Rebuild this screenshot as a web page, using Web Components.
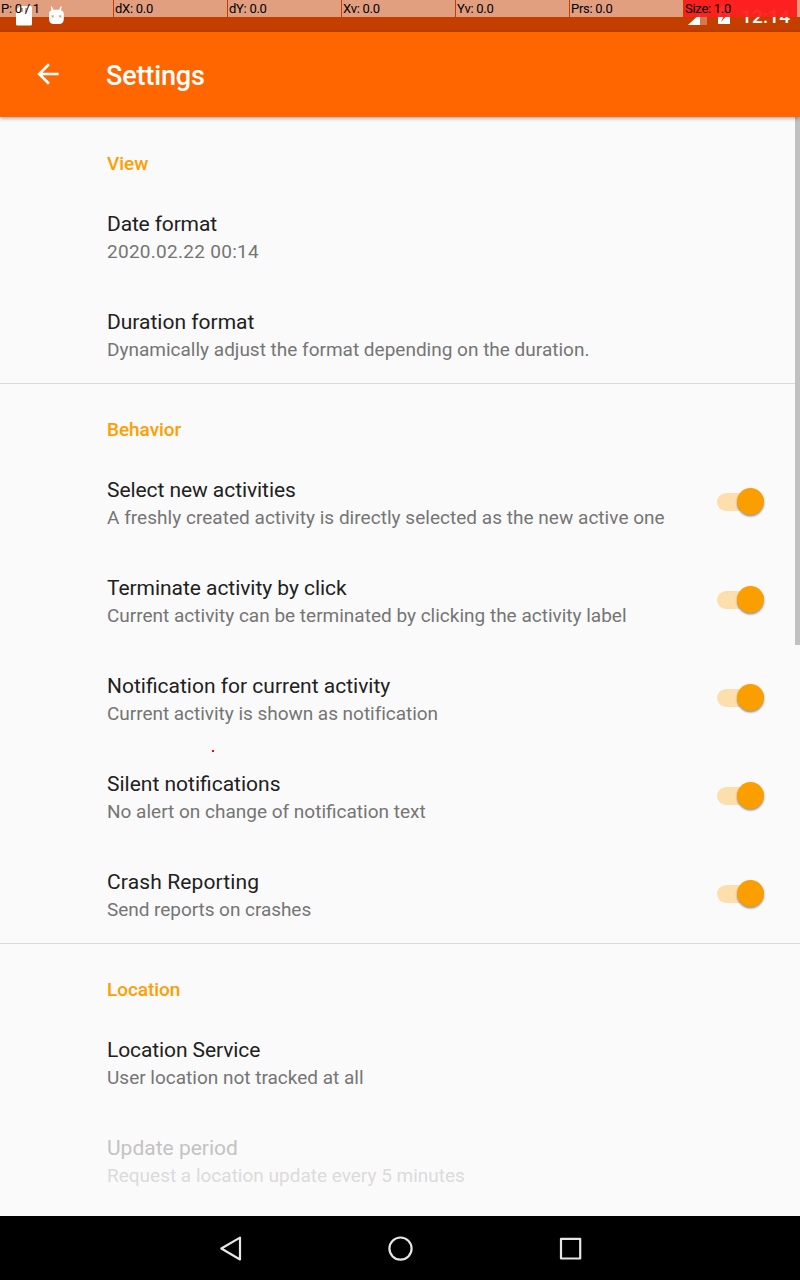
<!DOCTYPE html>
<html lang="en">
<head>
<meta charset="utf-8">
<title>Settings</title>
<style>
html,body{margin:0;height:100%;background:#fafafa}
body{font-family:Roboto,sans-serif;overflow:hidden}
</style>
</head>
<body>
<settings-screen></settings-screen>
<script>
function define(name, html) {
  const t = document.createElement('template');
  t.innerHTML = html;
  customElements.define(name, class extends HTMLElement {
    constructor() {
      super();
      this.attachShadow({mode: 'open'}).append(t.content.cloneNode(true));
    }
  });
}

define('status-bar', `
<style>
:host{display:flex;box-sizing:border-box;height:32px;background:#c43e00;align-items:flex-start}
svg{display:block}
.gap{flex:1}
.time{width:48px;margin-right:11px;font-weight:500;font-size:19px;line-height:22px;color:#fff;padding-top:6px;letter-spacing:.2px;white-space:nowrap}
</style>
<svg width="80" height="32" fill="#fff"><path d="M20 6h10.500q1.500 0 1.500 1.500V24q0 1.500-1.500 1.500h-13q-1.500 0-1.500-1.500V10z"/><path fill="#c43e00" d="M21 8h2v4h-2zM25 8h2v4h-2z"/>
<path fill-rule="evenodd" d="M49 13.500q0-2.500 2.500-3.300L50.800 6.500h1.200l1.300 3.300h6L60.500 6.500h1.200L61 10.200q2.800.8 2.800 3.300v5.500q0 5-5 5h-4.800q-5 0-5-5zM51.600 15.200v2h2v-2zM59.300 15.200v2h2v-2z"/></svg>
<span class="gap"></span>
<svg width="61" height="32"><path fill="#fff" fill-opacity=".3" d="M27 25V7L8 25z"/><path fill="#fff" d="M8 25L20 14V25z"/><path fill="#fff" d="M38 8h3V6h6v2h3v16H38zM46 9l-5.500 7.500h3L41 22l6.500-7.500h-3.500z" fill-rule="evenodd"/></svg>
<span class="time">12:14</span>`);

define('pointer-readout', `
<style>
:host{display:flex;height:17px;gap:1px;font-size:13px;letter-spacing:-.28px;line-height:17px;color:#000}
::slotted(span){width:112px;padding-left:1px;background:rgba(255,255,255,.5);white-space:pre}
::slotted(span:last-child){background:rgba(255,32,32,.94)!important}
.rest{flex:1;margin-left:-1px;background:rgba(255,255,255,.5)}
</style><slot></slot><i class="rest"></i>`);

define('app-bar', `
<style>
:host{display:flex;align-items:center;height:85px;background:#ff6600;color:#fff;box-shadow:0 1px 4px rgba(0,0,0,.4);position:relative;z-index:1}
svg{margin:0 0 1px 32.300px;width:32px;height:32px}
h1{margin:3px 0 0 41.700px;font-size:27px;font-weight:500;line-height:32px;letter-spacing:-.15px}
</style>
<svg viewBox="0 0 24 24" fill="#fff"><path d="M20 11H7.830l5.590-5.590L12 4l-8 8 8 8 1.410-1.410L7.830 13H20v-2z"/></svg>
<h1><slot></slot></h1>`);

define('settings-group', `
<style>
:host{display:block}
:host([ruled]) h2{border-top-color:#dadada}
h2{box-sizing:border-box;height:70px;margin:0;padding:35px 0 0 107px;border-top:1px solid transparent;font-size:19px;letter-spacing:-.05px;line-height:22px;font-weight:500;color:#ff9e00}
</style>
<h2><slot name="heading"></slot></h2><slot></slot>`);

define('toggle-switch', `
<style>
:host{display:flex;align-items:center;width:47px;height:28px;margin-right:36px}
.track{width:34px;height:18px;border-radius:9px;background:#fddfae}
.thumb{width:27px;height:27px;margin:0 0 1px -14.500px;border-radius:50%;background:#fb9e00;box-shadow:0 1.500px 2px rgba(0,0,0,.4)}
</style><i class="track"></i><i class="thumb"></i>`);

define('setting-row', `
<style>
:host{display:flex;align-items:center;justify-content:space-between;box-sizing:border-box;height:98px;padding:2px 0 0 107px;color:#212121}
.title{font-size:21px;line-height:28px;letter-spacing:var(--title-tracking,0)}
.summary{font-size:19px;line-height:26px;color:#757575;padding-top:1px;letter-spacing:var(--summary-tracking,0)}
:host([disabled]) .title{color:#c3c3c3}
:host([disabled]) .summary{color:#dbdbdb}
::slotted(toggle-switch){margin-top:-2px}
</style>
<div><div class="title"><slot name="title"></slot></div><div class="summary"><slot></slot></div></div>
<slot name="control"></slot>`);

define('nav-bar', `
<style>
:host{display:flex;justify-content:center;align-items:center;gap:106px;height:64px;background:#000}
svg{width:64px;height:64px;fill:none;stroke:#e6e6e6;stroke-width:2.200;stroke-linejoin:round}
</style>
<svg><path d="M23.300 32.500L42 21.600V43.500z"/></svg>
<svg><circle cx="32.500" cy="32.600" r="11.100"/></svg>
<svg><rect x="23" y="22.800" width="19.200" height="19.700"/></svg>`);

define('settings-screen', `
<style>
:host{display:flex;flex-direction:column;height:1280px;width:800px;position:relative;background:#fafafa;overflow:hidden}
main{flex:1;min-height:0;overflow:hidden}
nav-bar,app-bar,status-bar{flex:none}
pointer-readout{position:absolute;left:0;top:0;width:800px;z-index:3}
.scroll{position:absolute;right:0;top:117px;width:5px;height:528px;background:#c1c1c1}
.touch{position:absolute;left:212px;top:750px;width:2px;height:2px;background:#f00}
</style>
<status-bar></status-bar>
<pointer-readout><span>P: 0 / 1</span><span>dX: 0.0</span><span>dY: 0.0</span><span>Xv: 0.0</span><span>Yv: 0.0</span><span>Prs: 0.0</span><span>Size: 1.0</span></pointer-readout>
<app-bar>Settings</app-bar>
<main>
<settings-group><span slot="heading">View</span>
<setting-row style="--title-tracking:-.15px;--summary-tracking:.28px"><span slot="title">Date format</span>2020.02.22 00:14</setting-row>
<setting-row><span slot="title">Duration format</span>Dynamically adjust the format depending on the duration.</setting-row>
</settings-group>
<settings-group ruled><span slot="heading">Behavior</span>
<setting-row style="--title-tracking:-.07px;--summary-tracking:.03px"><span slot="title">Select new activities</span>A freshly created activity is directly selected as the new active one<toggle-switch slot="control"></toggle-switch></setting-row>
<setting-row style="--title-tracking:-.05px"><span slot="title">Terminate activity by click</span>Current activity can be terminated by clicking the activity label<toggle-switch slot="control"></toggle-switch></setting-row>
<setting-row style="--summary-tracking:-.03px"><span slot="title">Notification for current activity</span>Current activity is shown as notification<toggle-switch slot="control"></toggle-switch></setting-row>
<setting-row><span slot="title">Silent notifications</span>No alert on change of notification text<toggle-switch slot="control"></toggle-switch></setting-row>
<setting-row style="--title-tracking:.13px;--summary-tracking:-.05px"><span slot="title">Crash Reporting</span>Send reports on crashes<toggle-switch slot="control"></toggle-switch></setting-row>
</settings-group>
<settings-group ruled><span slot="heading">Location</span>
<setting-row style="--title-tracking:-.1px"><span slot="title">Location Service</span>User location not tracked at all</setting-row>
<setting-row disabled><span slot="title">Update period</span>Request a location update every 5 minutes</setting-row>
</settings-group>
</main>
<nav-bar></nav-bar>
<i class="scroll"></i><i class="touch"></i>`);
</script>
</body>
</html>
